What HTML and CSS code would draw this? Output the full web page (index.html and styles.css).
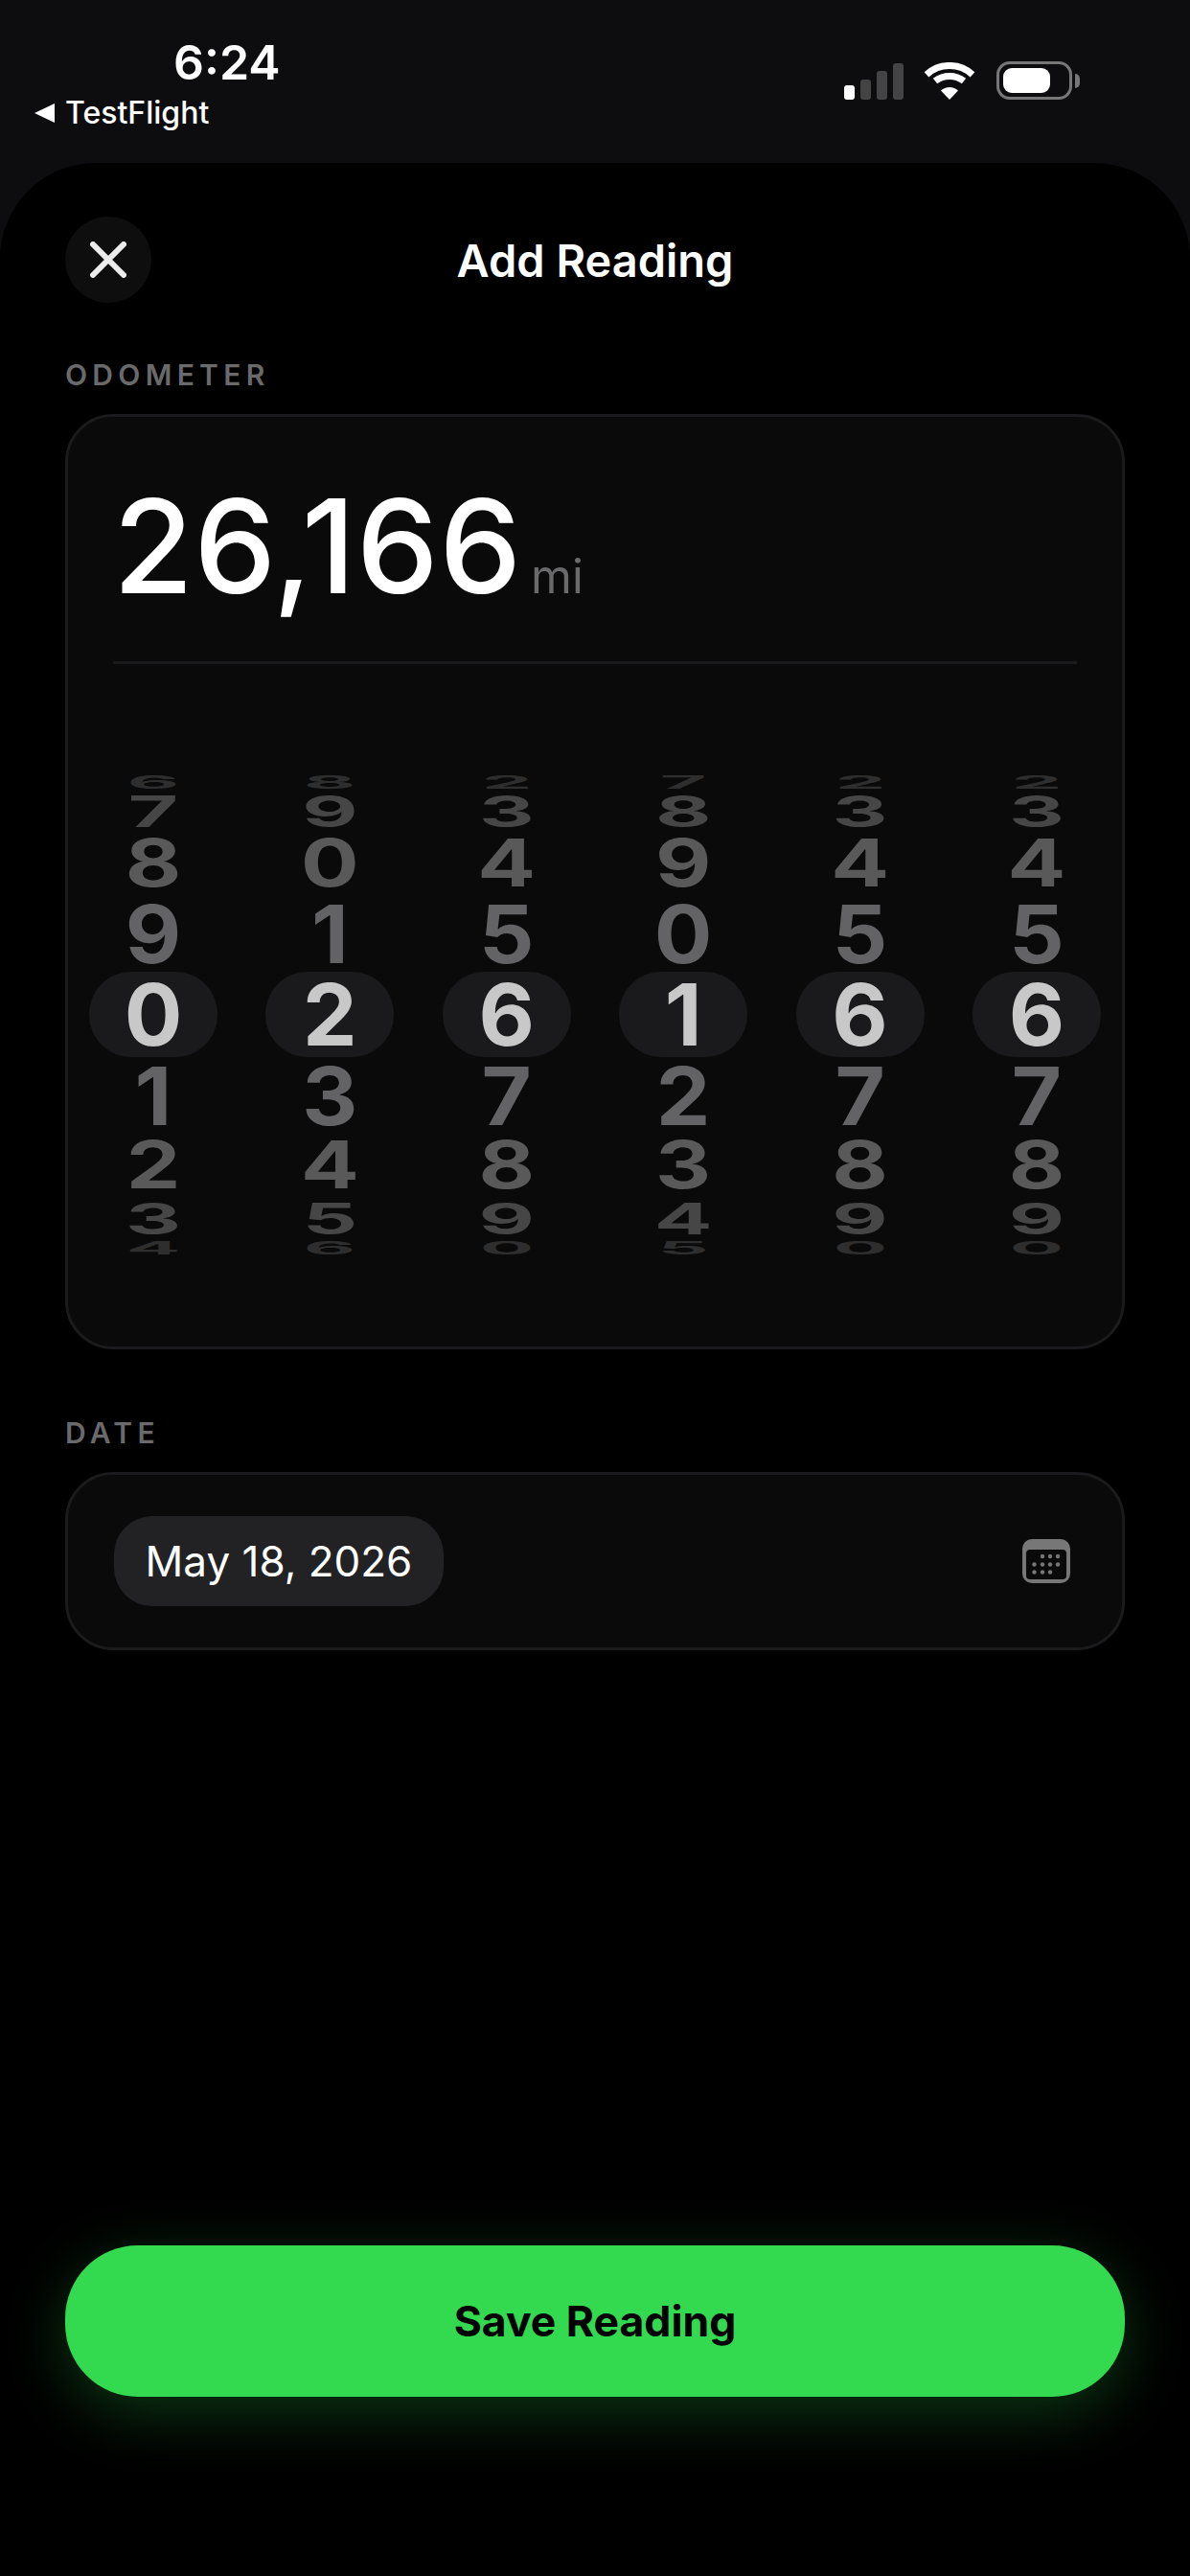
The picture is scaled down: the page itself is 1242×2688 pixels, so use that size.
FILE: index.html
```html
<!DOCTYPE html>
<html lang="en">
<head>
    <meta charset="UTF-8">
    <meta name="viewport" content="width=device-width, initial-scale=1.0">
    <title>Add Reading</title>
    <link rel="stylesheet" href="styles.css">
</head>
<body>
    <div class="status-bar">
        <div class="status-left">
            <div class="status-time">6:24</div>
            <div class="status-back"><span class="back-arrow"></span>TestFlight</div>
        </div>
        <div class="status-icons">
            <div class="signal">
                <span class="bar bar-1 on"></span>
                <span class="bar bar-2"></span>
                <span class="bar bar-3"></span>
                <span class="bar bar-4"></span>
            </div>
            <svg class="wifi" width="54" height="39" viewBox="0 0 54 39">
                <path d="M3 12.8A35.5 35.5 0 0 1 51 12.8" fill="none" stroke="#fff" stroke-width="7"/>
                <path d="M12 19.6A24.5 24.5 0 0 1 42 19.6" fill="none" stroke="#fff" stroke-width="7"/>
                <path d="M27 39L18 29.6A13 13 0 0 1 36 29.6Z" fill="#fff"/>
            </svg>
            <div class="battery"><div class="battery-level"></div></div>
            <div class="battery-cap"></div>
        </div>
    </div>

    <div class="sheet">
        <div class="sheet-header">
            <div class="close-button">
                <svg width="38" height="38" viewBox="0 0 38 38">
                    <path d="M3 3L35 35M35 3L3 35" fill="none" stroke="#ececec" stroke-width="6" stroke-linecap="round"/>
                </svg>
            </div>
            <div class="sheet-title">Add Reading</div>
        </div>

        <div class="section-label odometer-label">ODOMETER</div>
        <div class="card odometer-card">
            <div class="reading">
                <span class="reading-value">26,166</span>
                <span class="reading-unit">mi</span>
            </div>
            <div class="wheels">
                <div class="wheel">
                    <span class="cell up4">6</span><span class="cell up3">7</span><span class="cell up2">8</span><span class="cell up1">9</span><span class="cell sel">0</span><span class="cell dn1">1</span><span class="cell dn2">2</span><span class="cell dn3">3</span><span class="cell dn4">4</span>
                </div>
                <div class="wheel">
                    <span class="cell up4">8</span><span class="cell up3">9</span><span class="cell up2">0</span><span class="cell up1">1</span><span class="cell sel">2</span><span class="cell dn1">3</span><span class="cell dn2">4</span><span class="cell dn3">5</span><span class="cell dn4">6</span>
                </div>
                <div class="wheel">
                    <span class="cell up4">2</span><span class="cell up3">3</span><span class="cell up2">4</span><span class="cell up1">5</span><span class="cell sel">6</span><span class="cell dn1">7</span><span class="cell dn2">8</span><span class="cell dn3">9</span><span class="cell dn4">0</span>
                </div>
                <div class="wheel">
                    <span class="cell up4">7</span><span class="cell up3">8</span><span class="cell up2">9</span><span class="cell up1">0</span><span class="cell sel">1</span><span class="cell dn1">2</span><span class="cell dn2">3</span><span class="cell dn3">4</span><span class="cell dn4">5</span>
                </div>
                <div class="wheel">
                    <span class="cell up4">2</span><span class="cell up3">3</span><span class="cell up2">4</span><span class="cell up1">5</span><span class="cell sel">6</span><span class="cell dn1">7</span><span class="cell dn2">8</span><span class="cell dn3">9</span><span class="cell dn4">0</span>
                </div>
                <div class="wheel">
                    <span class="cell up4">2</span><span class="cell up3">3</span><span class="cell up2">4</span><span class="cell up1">5</span><span class="cell sel">6</span><span class="cell dn1">7</span><span class="cell dn2">8</span><span class="cell dn3">9</span><span class="cell dn4">0</span>
                </div>
            </div>
        </div>

        <div class="section-label date-label">DATE</div>
        <div class="card date-card">
            <div class="date-pill">May 18, 2026</div>
            <svg class="calendar" width="50" height="46" viewBox="0 0 50 46">
                <path fill="#777" fill-rule="evenodd" d="M10 0H40A10 10 0 0 1 50 10V36A10 10 0 0 1 40 46H10A10 10 0 0 1 0 36V10A10 10 0 0 1 10 0ZM8 11A4 4 0 0 0 4 15V38A4 4 0 0 0 8 42H42A4 4 0 0 0 46 38V15A4 4 0 0 0 42 11Z"/>
                <g fill="#777">
                    <circle cx="21" cy="18" r="2.2"/><circle cx="29" cy="18" r="2.2"/><circle cx="37" cy="18" r="2.2"/>
                    <circle cx="12.500" cy="26.500" r="2.2"/><circle cx="21" cy="26.500" r="2.2"/><circle cx="29" cy="26.500" r="2.2"/><circle cx="37" cy="26.500" r="2.2"/>
                    <circle cx="12.500" cy="34.500" r="2.2"/><circle cx="21" cy="34.500" r="2.2"/><circle cx="29" cy="34.500" r="2.2"/>
                </g>
            </svg>
        </div>

        <div class="save-button">Save Reading</div>
    </div>
</body>
</html>
```

FILE: styles.css
```css
* {
    box-sizing: border-box;
}
body {
    margin: 0;
    height: 2688px;
    display: flex;
    flex-direction: column;
    overflow: hidden;
    background-color: #0d0d0f;
    color: white;
    font-family: "Inter", "Liberation Sans", sans-serif;
}

/* status bar */
.status-bar {
    height: 170px;
    flex: none;
    display: flex;
    justify-content: space-between;
    padding: 38px 115px 0 36px;
}
.status-time {
    margin-left: 145px;
    font-size: 50px;
    font-weight: 600;
    line-height: 54px;
}
.status-back {
    display: flex;
    align-items: center;
    gap: 11px;
    margin-top: 6px;
    font-size: 32px;
    font-weight: 500;
    line-height: 40px;
}
.back-arrow {
    width: 21px;
    height: 20px;
    background-color: white;
    clip-path: polygon(0 50%, 100% 0, 100% 100%);
}
.status-icons {
    display: flex;
    align-items: flex-start;
    padding-top: 27px;
}
.signal {
    display: flex;
    align-items: flex-end;
    gap: 6px;
    height: 39px;
    margin-right: 21px;
}
.bar {
    width: 11px;
    border-radius: 3px;
    background-color: #444;
}
.bar.on {
    background-color: white;
}
.bar-1 { height: 15px; }
.bar-2 { height: 21px; }
.bar-3 { height: 30px; }
.bar-4 { height: 38px; }
.wifi {
    margin-right: 22px;
}
.battery {
    width: 79px;
    height: 40px;
    margin-top: -1px;
    padding: 4px 0 0 4px;
    border: 3px solid #777;
    border-radius: 14px;
}
.battery-level {
    width: 49px;
    height: 26px;
    border-radius: 9px;
    background-color: white;
}
.battery-cap {
    width: 5px;
    height: 15px;
    margin: 12px 0 0 3px;
    border-radius: 0 5px 5px 0;
    background-color: #777;
}

/* sheet */
.sheet {
    flex: 1;
    display: flex;
    flex-direction: column;
    padding: 56px 68px 187px;
    border-radius: 100px 100px 0 0;
    background-color: black;
}
.sheet-header {
    display: grid;
    grid-template-columns: 90px 1fr 90px;
    align-items: center;
}
.close-button {
    width: 90px;
    height: 90px;
    display: flex;
    align-items: center;
    justify-content: center;
    border-radius: 50%;
    background-color: #0e0e0f;
}
.sheet-title {
    text-align: center;
    font-size: 47px;
    font-weight: 600;
}
.section-label {
    font-size: 30px;
    font-weight: 600;
    line-height: 36px;
    letter-spacing: 5.3px;
    color: #6a6a6c;
}
.odometer-label {
    margin-top: 57px;
}
.date-label {
    margin-top: 69px;
}
.card {
    margin-top: 23px;
    border: 3px solid #1b1b1d;
    border-radius: 50px;
    background-color: #0a0a0a;
}

/* odometer */
.odometer-card {
    height: 976px;
    padding: 0 22px;
}
.reading {
    display: flex;
    align-items: baseline;
    gap: 9px;
    height: 258px;
    margin: 0 25px;
    padding-top: 55px;
    border-bottom: 3px solid #1b1b1d;
}
.reading-value {
    font-size: 136px;
    font-weight: 500;
    line-height: 160px;
    letter-spacing: .8px;
}
.reading-unit {
    font-size: 49px;
    color: #6a6a6c;
}
.wheels {
    display: flex;
    justify-content: space-between;
    margin-top: 113px;
}
.wheel {
    width: 134px;
    display: flex;
    flex-direction: column;
    font-size: 90px;
    font-weight: 700;
}
.cell {
    display: flex;
    align-items: center;
    justify-content: center;
    line-height: 1;
    color: #636365;
}
.up4, .dn4 { transform: scale(.93, .21); color: #2e2e2f; }
.up3, .dn3 { transform: scaleY(.5); color: #464647; }
.up2, .dn2 { transform: scaleY(.76); color: #59595a; }
.up1, .dn1 { transform: scaleY(.93); color: #636365; }
.up4 { height: 21px; }
.up3 { height: 39px; }
.up2 { height: 70px; }
.up1 { height: 78px; }
.sel {
    height: 89px;
    border-radius: 44px;
    background-color: #1a1a1c;
    color: #c8c8c8;
}
.dn1 { height: 81px; }
.dn2 { height: 64px; }
.dn3 { height: 47px; }
.dn4 { height: 15px; }

/* date */
.date-card {
    height: 186px;
    display: flex;
    align-items: center;
    justify-content: space-between;
    padding: 0 54px 0 48px;
}
.date-pill {
    width: 344px;
    height: 94px;
    display: flex;
    align-items: center;
    justify-content: center;
    border-radius: 40px;
    background-color: #222224;
    font-size: 44px;
}

/* save */
.save-button {
    height: 158px;
    margin-top: auto;
    display: flex;
    align-items: center;
    justify-content: center;
    border-radius: 76px;
    background-color: #33da50;
    box-shadow: 0 16px 64px rgba(50, 218, 80, .25);
    color: black;
    font-size: 44.500px;
    font-weight: 700;
}
```
